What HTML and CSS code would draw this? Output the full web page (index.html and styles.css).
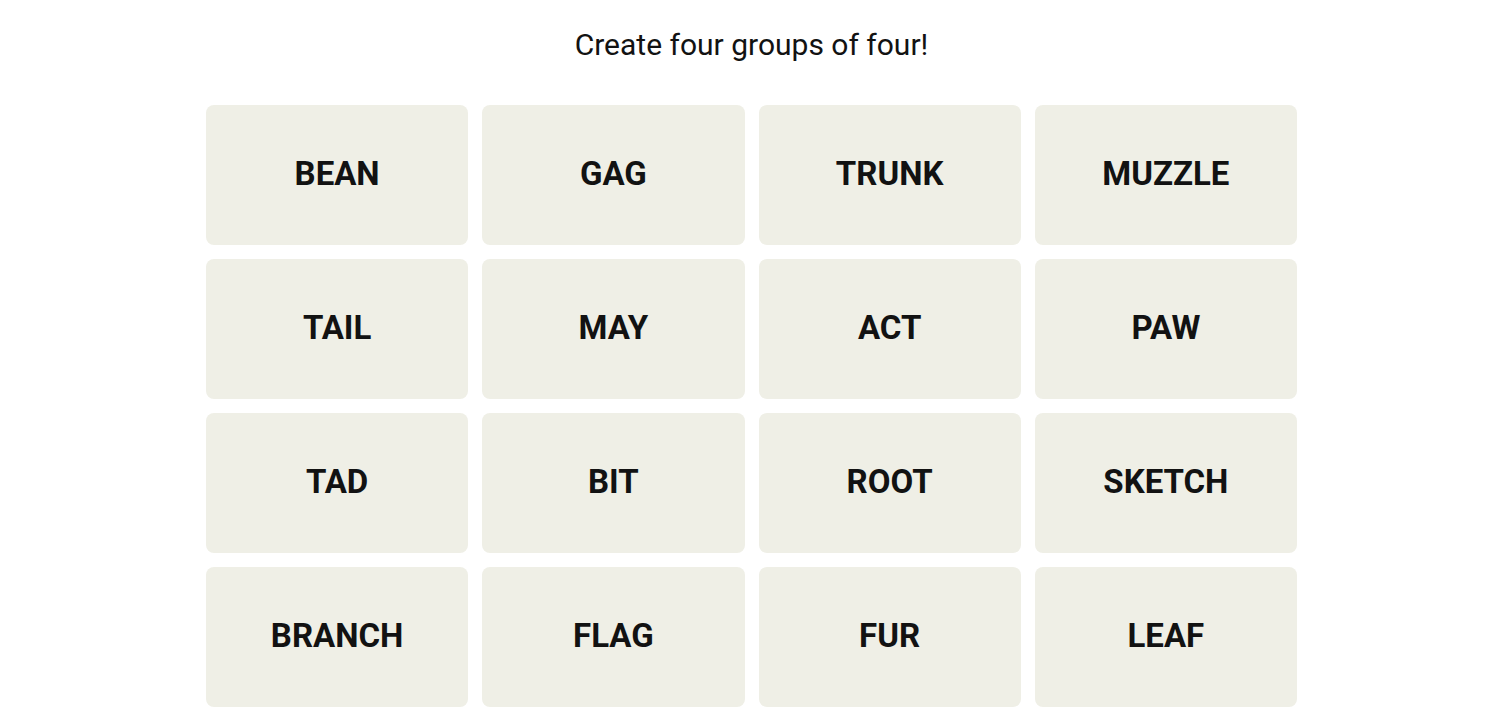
FILE: index.html
```html
<!DOCTYPE html>
<html lang="en">
<head>
<meta charset="utf-8">
<title>Connections</title>
<link rel="stylesheet" href="styles.css">
</head>
<body>
<main class="game">
  <h1 class="prompt">Create four groups of four!</h1>
  <div class="board">
    <button class="tile">BEAN</button>
    <button class="tile">GAG</button>
    <button class="tile">TRUNK</button>
    <button class="tile">MUZZLE</button>
    <button class="tile">TAIL</button>
    <button class="tile">MAY</button>
    <button class="tile">ACT</button>
    <button class="tile">PAW</button>
    <button class="tile">TAD</button>
    <button class="tile">BIT</button>
    <button class="tile">ROOT</button>
    <button class="tile">SKETCH</button>
    <button class="tile">BRANCH</button>
    <button class="tile">FLAG</button>
    <button class="tile">FUR</button>
    <button class="tile">LEAF</button>
  </div>
</main>
</body>
</html>
```

FILE: styles.css
```css
html, body {
  margin: 0;
  padding: 0;
  background: #ffffff;
}

body {
  font-family: Roboto, "Liberation Sans", Arial, sans-serif;
  color: #121212;
}

.game {
  display: flex;
  flex-direction: column;
  align-items: center;
  padding-left: 3px;
}

.prompt {
  margin: 0;
  padding-top: 26px;
  height: 105px;
  box-sizing: border-box;
  font-size: 30px;
  font-weight: 400;
  line-height: 38px;
  color: #121212;
}

.board {
  display: grid;
  grid-template-columns: repeat(4, 1fr);
  grid-auto-rows: 140px;
  gap: 14px;
  width: 1091px;
}

.tile {
  border: none;
  border-radius: 8px;
  background: #efefe6;
  color: #121212;
  font-family: Roboto, "Liberation Sans", Arial, sans-serif;
  font-size: 33px;
  font-weight: 700;
  padding: 0 0 4px;
  display: flex;
  align-items: center;
  justify-content: center;
}
```
